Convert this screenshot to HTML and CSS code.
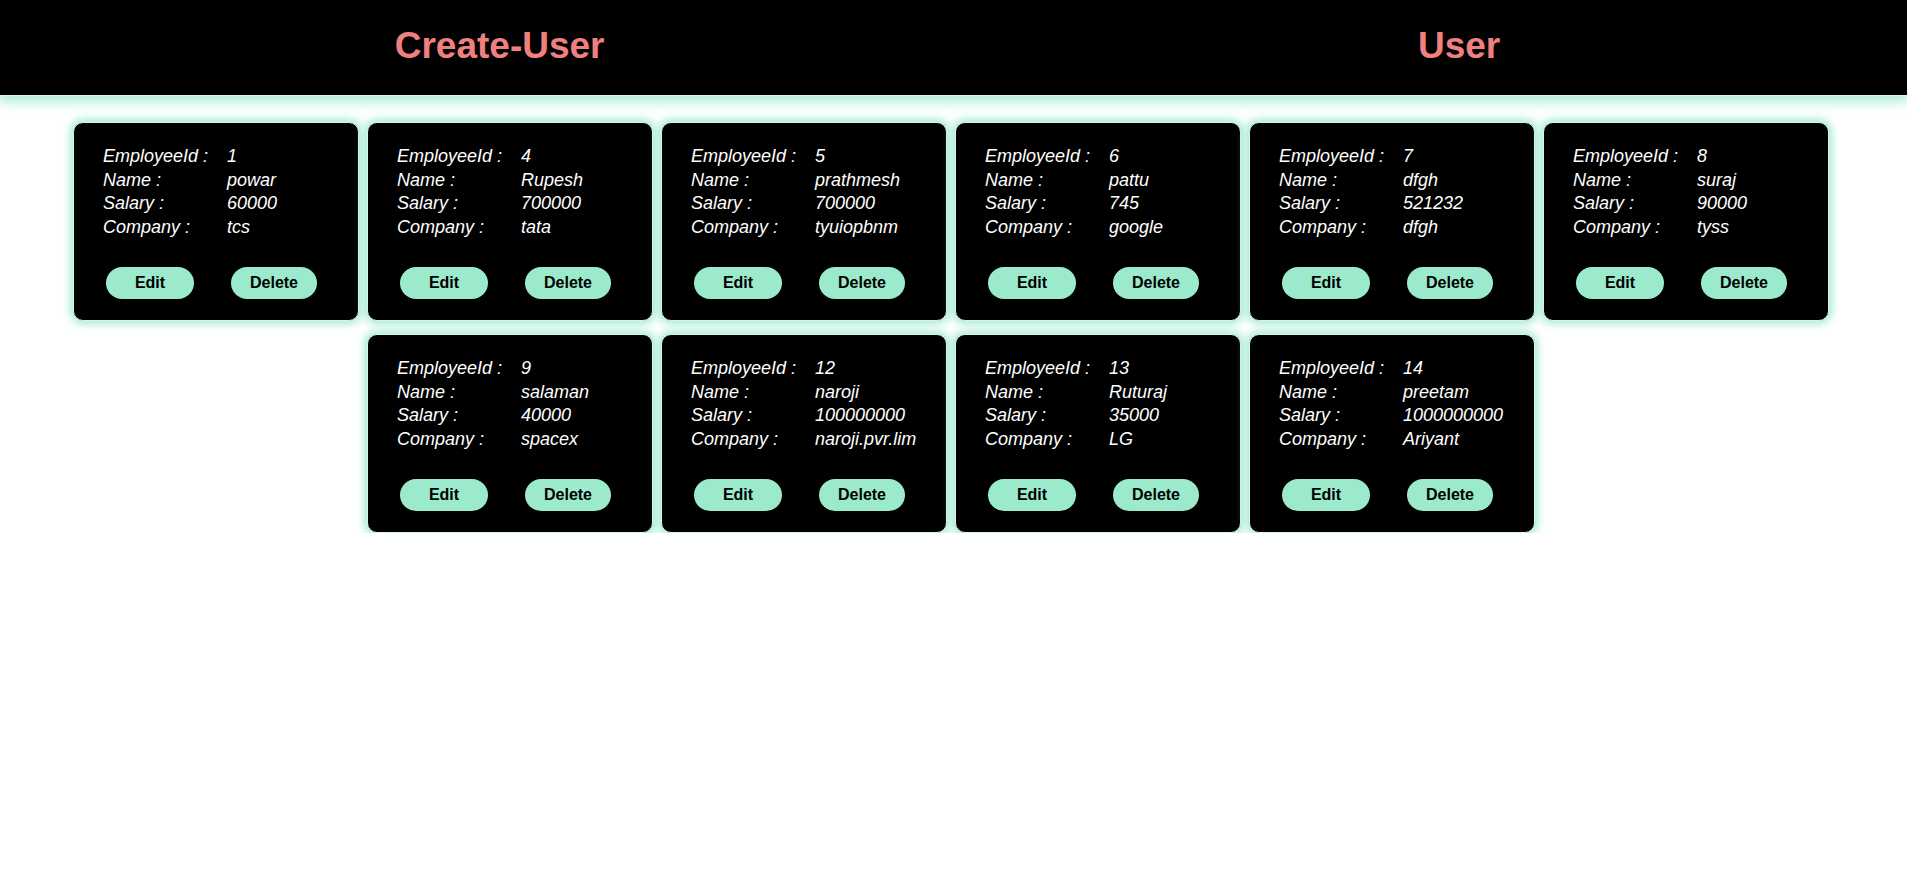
FILE: index.html
```html
<!DOCTYPE html>
<html lang="en">
<head>
<meta charset="utf-8">
<title>Users</title>
<link rel="stylesheet" href="styles.css">
</head>
<body>
<header class="topbar">
  <h1 class="nav-title nav-create">Create-User</h1>
  <h1 class="nav-title">User</h1>
</header>
<main class="cards">
  <div class="card">
    <div class="info">
      <span>EmployeeId :</span><span>1</span>
      <span>Name :</span><span>powar</span>
      <span>Salary :</span><span>60000</span>
      <span>Company :</span><span>tcs</span>
    </div>
    <div class="actions"><button class="btn btn-edit">Edit</button><button class="btn btn-delete">Delete</button></div>
  </div>
  <div class="card">
    <div class="info">
      <span>EmployeeId :</span><span>4</span>
      <span>Name :</span><span>Rupesh</span>
      <span>Salary :</span><span>700000</span>
      <span>Company :</span><span>tata</span>
    </div>
    <div class="actions"><button class="btn btn-edit">Edit</button><button class="btn btn-delete">Delete</button></div>
  </div>
  <div class="card">
    <div class="info">
      <span>EmployeeId :</span><span>5</span>
      <span>Name :</span><span>prathmesh</span>
      <span>Salary :</span><span>700000</span>
      <span>Company :</span><span>tyuiopbnm</span>
    </div>
    <div class="actions"><button class="btn btn-edit">Edit</button><button class="btn btn-delete">Delete</button></div>
  </div>
  <div class="card">
    <div class="info">
      <span>EmployeeId :</span><span>6</span>
      <span>Name :</span><span>pattu</span>
      <span>Salary :</span><span>745</span>
      <span>Company :</span><span>google</span>
    </div>
    <div class="actions"><button class="btn btn-edit">Edit</button><button class="btn btn-delete">Delete</button></div>
  </div>
  <div class="card">
    <div class="info">
      <span>EmployeeId :</span><span>7</span>
      <span>Name :</span><span>dfgh</span>
      <span>Salary :</span><span>521232</span>
      <span>Company :</span><span>dfgh</span>
    </div>
    <div class="actions"><button class="btn btn-edit">Edit</button><button class="btn btn-delete">Delete</button></div>
  </div>
  <div class="card">
    <div class="info">
      <span>EmployeeId :</span><span>8</span>
      <span>Name :</span><span>suraj</span>
      <span>Salary :</span><span>90000</span>
      <span>Company :</span><span>tyss</span>
    </div>
    <div class="actions"><button class="btn btn-edit">Edit</button><button class="btn btn-delete">Delete</button></div>
  </div>
  <div class="card">
    <div class="info">
      <span>EmployeeId :</span><span>9</span>
      <span>Name :</span><span>salaman</span>
      <span>Salary :</span><span>40000</span>
      <span>Company :</span><span>spacex</span>
    </div>
    <div class="actions"><button class="btn btn-edit">Edit</button><button class="btn btn-delete">Delete</button></div>
  </div>
  <div class="card">
    <div class="info">
      <span>EmployeeId :</span><span>12</span>
      <span>Name :</span><span>naroji</span>
      <span>Salary :</span><span>100000000</span>
      <span>Company :</span><span>naroji.pvr.lim</span>
    </div>
    <div class="actions"><button class="btn btn-edit">Edit</button><button class="btn btn-delete">Delete</button></div>
  </div>
  <div class="card">
    <div class="info">
      <span>EmployeeId :</span><span>13</span>
      <span>Name :</span><span>Ruturaj</span>
      <span>Salary :</span><span>35000</span>
      <span>Company :</span><span>LG</span>
    </div>
    <div class="actions"><button class="btn btn-edit">Edit</button><button class="btn btn-delete">Delete</button></div>
  </div>
  <div class="card">
    <div class="info">
      <span>EmployeeId :</span><span>14</span>
      <span>Name :</span><span>preetam</span>
      <span>Salary :</span><span>1000000000</span>
      <span>Company :</span><span>Ariyant</span>
    </div>
    <div class="actions"><button class="btn btn-edit">Edit</button><button class="btn btn-delete">Delete</button></div>
  </div>
</main>
</body>
</html>
```

FILE: styles.css
```css
html, body {
  margin: 0;
  padding: 0;
  background: #ffffff;
  font-family: "Liberation Sans", Arial, sans-serif;
}

.topbar {
  box-sizing: border-box;
  height: 96px;
  padding-top: 25px;
  background: #000000;
  display: flex;
  justify-content: space-around;
  align-items: flex-start;
  border-bottom: 1px solid #dcf8ee;
  box-shadow: 0 3px 12px 2px #a4ebd1;
  position: relative;
  z-index: 1;
}

.nav-title {
  margin: 0;
  font-size: 37px;
  font-weight: bold;
  color: #f08080;
  line-height: normal;
}

.nav-create {
  margin-left: -12px;
}

.cards {
  display: flex;
  flex-wrap: wrap;
  justify-content: center;
  gap: 13px 8px;
  padding: 26px 5px 0 0;
}

.card {
  box-sizing: border-box;
  width: 286px;
  padding: 22px 0 21px 29px;
  background: #000000;
  border: 1px solid #d2f6e8;
  border-radius: 10px;
  box-shadow: 0 0 8px 3px #a6ebd1;
}

.info {
  display: grid;
  grid-template-columns: 124px auto;
  font-size: 18px;
  font-style: italic;
  line-height: 23.5px;
  color: #ffffff;
}

.actions {
  display: flex;
  gap: 37px;
  margin-top: 28px;
  padding-left: 3px;
}

.btn {
  height: 32px;
  border: none;
  border-radius: 16px;
  background: #9beacb;
  color: #000000;
  font-family: "Liberation Sans", Arial, sans-serif;
  font-size: 16px;
  font-weight: bold;
  padding: 0;
}

.btn-edit {
  width: 88px;
}

.btn-delete {
  width: 86px;
}
```
